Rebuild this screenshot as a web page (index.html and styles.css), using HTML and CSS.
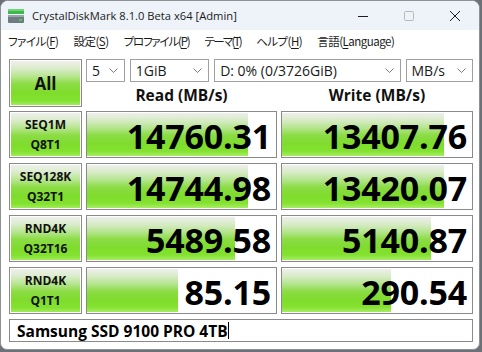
FILE: index.html
```html
<!DOCTYPE html>
<html lang="ja">
<head>
<meta charset="utf-8">
<title>CrystalDiskMark</title>
<link rel="stylesheet" href="styles.css">
</head>
<body>
<div class="window">
  <div class="titlebar">
    <svg class="appicon" width="16" height="16" viewBox="0 0 16 16">
      <rect x="0" y="1" width="16" height="5" fill="#3cb94a"/>
      <rect x="0" y="1" width="16" height="2" fill="#6fd47a"/>
      <rect x="0" y="7" width="16" height="8" rx="1" fill="#707a82"/>
      <rect x="0" y="7" width="16" height="2" fill="#9aa3aa"/>
      <rect x="11" y="11" width="3" height="2" fill="#4cd04c"/>
    </svg>
    <span class="title">CrystalDiskMark 8.1.0 Beta x64 [Admin]</span>
    <div class="controls">
      <span class="ctl"><svg width="12" height="12" viewBox="0 0 12 12"><line x1="1" y1="6.5" x2="11" y2="6.5" stroke="#1c1c1c" stroke-width="1"/></svg></span>
      <span class="ctl"><svg width="12" height="12" viewBox="0 0 12 12"><rect x="1.5" y="1.5" width="9" height="9" rx="1" fill="none" stroke="#b8b8b8" stroke-width="1"/></svg></span>
      <span class="ctl"><svg width="12" height="12" viewBox="0 0 12 12"><path d="M1 1 L11 11 M11 1 L1 11" stroke="#1c1c1c" stroke-width="1"/></svg></span>
    </div>
  </div>
  <div class="menubar">
    <span class="menu">ファイル(<u>F</u>)</span>
    <span class="menu">設定(<u>S</u>)</span>
    <span class="menu tight">プロファイル(<u>P</u>)</span>
    <span class="menu tighter">テーマ(<u>T</u>)</span>
    <span class="menu">ヘルプ(<u>H</u>)</span>
    <span class="menu">言語(<u>L</u>anguage)</span>
  </div>
  <div class="main">
    <div class="green all">All</div>
    <div class="topright">
      <div class="selects">
        <div class="select s-count"><span>5</span><svg class="chev" width="9" height="5" viewBox="0 0 9 5"><polyline points="0.5,0.5 4.5,4.5 8.5,0.5" fill="none" stroke="#7a7a7a"/></svg></div>
        <div class="select s-size"><span>1GiB</span><svg class="chev" width="9" height="5" viewBox="0 0 9 5"><polyline points="0.5,0.5 4.5,4.5 8.5,0.5" fill="none" stroke="#7a7a7a"/></svg></div>
        <div class="select s-drive"><span>D: 0% (0/3726GiB)</span><svg class="chev" width="9" height="5" viewBox="0 0 9 5"><polyline points="0.5,0.5 4.5,4.5 8.5,0.5" fill="none" stroke="#7a7a7a"/></svg></div>
        <div class="select s-unit"><span>MB/s</span><svg class="chev" width="9" height="5" viewBox="0 0 9 5"><polyline points="0.5,0.5 4.5,4.5 8.5,0.5" fill="none" stroke="#7a7a7a"/></svg></div>
      </div>
      <div class="heads">
        <div class="head">Read (MB/s)</div>
        <div class="head">Write (MB/s)</div>
      </div>
    </div>

    <div class="green label">SEQ1M<br>Q8T1</div>
    <div class="result"><div class="bar" style="width:85%"></div><span class="val">14760.31</span></div>
    <div class="result"><div class="bar" style="width:85.5%"></div><span class="val">13407.76</span></div>

    <div class="green label">SEQ128K<br>Q32T1</div>
    <div class="result"><div class="bar" style="width:85%"></div><span class="val">14744.98</span></div>
    <div class="result"><div class="bar" style="width:85.5%"></div><span class="val">13420.07</span></div>

    <div class="green label">RND4K<br>Q32T16</div>
    <div class="result"><div class="bar" style="width:78.5%"></div><span class="val">5489.58</span></div>
    <div class="result"><div class="bar" style="width:78.5%"></div><span class="val">5140.87</span></div>

    <div class="green label">RND4K<br>Q1T1</div>
    <div class="result"><div class="bar" style="width:48%"></div><span class="val">85.15</span></div>
    <div class="result"><div class="bar" style="width:57.5%"></div><span class="val">290.54</span></div>

    <div class="name"><span>Samsung SSD 9100 PRO 4TB</span><span class="caret"></span></div>
  </div>
</div>
</body>
</html>
```
FILE: styles.css
```css
html, body {
  margin: 0;
  padding: 0;
}
body {
  width: 482px;
  height: 352px;
  background: #6c7178;
  overflow: hidden;
  font-family: "Open Sans", "Noto Sans CJK JP", sans-serif;
  color: #000;
}
.window {
  box-sizing: border-box;
  width: 480px;
  height: 350px;
  border: 1px solid #8e9196;
  border-radius: 8px 8px 7px 7px;
  background: #ffffff;
  overflow: hidden;
  display: flex;
  flex-direction: column;
}
.titlebar {
  height: 29px;
  background: #eef3f9;
  display: flex;
  align-items: center;
  padding-left: 7px;
}
.appicon {
  flex: none;
  margin-top: 1px;
}
.title {
  margin-left: 8px;
  font-family: "Open Sans", sans-serif;
  font-size: 11.2px;
  color: #1a1a1a;
}
.controls {
  margin-left: auto;
  display: flex;
  height: 29px;
  padding-right: 1px;
}
.ctl {
  width: 46px;
  display: flex;
  align-items: center;
  justify-content: center;
}
.menubar {
  height: 22px;
  display: flex;
  align-items: center;
  padding-left: 7px;
  gap: 15px;
  font-family: "Noto Sans CJK JP", sans-serif;
  font-size: 11.5px;
  font-feature-settings: "palt";
  letter-spacing: -0.5px;
  color: #1a1a1a;
}
.menu.tight {
  letter-spacing: -1.2px;
}
.menu.tighter {
  letter-spacing: -1.7px;
}
.menu u {
  text-decoration-thickness: 1px;
  text-underline-offset: 2px;
}
.main {
  padding: 7px 0 0 8px;
  display: grid;
  grid-template-columns: 73px 191px 192px;
  grid-template-rows: 47px 47px 47px 47px 47px 23px;
  column-gap: 4px;
  row-gap: 5px;
}
.green {
  box-sizing: border-box;
  border: 1px solid #8a8a8a;
  background: linear-gradient(to bottom, #f1f1f1 0%, #dbeccc 18%, #b6e58d 36%, #8bdc45 52%, #7fdc2c 72%, #83e22f 88%, #a6ec63 100%);
  background-clip: padding-box;
  box-shadow: inset 0 0 0 1px #ffffff;
  display: flex;
  align-items: center;
  justify-content: center;
  text-align: center;
  font-weight: 700;
  color: #111;
}
.all {
  height: 48px;
  font-size: 17px;
}
.label {
  font-size: 12px;
  line-height: 20px;
  padding-top: 1px;
}
.topright {
  grid-column: 2 / 4;
  display: flex;
  flex-direction: column;
}
.selects {
  display: flex;
  gap: 5px;
  height: 23px;
}
.select {
  box-sizing: border-box;
  height: 23px;
  border: 1px solid #a0a0a0;
  background: #fff;
  display: flex;
  align-items: center;
  padding: 0 6px 0 5px;
  font-size: 14px;
  color: #1a1a1a;
}
.select .chev {
  margin-left: auto;
}
.s-count { width: 39px; }
.s-size { width: 80px; }
.s-drive { width: 188px; }
.s-unit { width: 68px; }
.heads {
  flex: 1;
  display: flex;
  gap: 4px;
  align-items: center;
  padding-top: 1px;
}
.head {
  flex: 1;
  text-align: center;
  font-weight: 700;
  font-size: 15.5px;
  color: #111;
}
.heads .head:first-child {
  flex: 0 0 191px;
}
.result {
  box-sizing: border-box;
  border: 1px solid #8a8a8a;
  padding: 1px 0 1px 0;
  background: #fff;
  position: relative;
  display: flex;
}
.bar {
  height: 100%;
  background: linear-gradient(to bottom, #eef0ec 0%, #d6ebc4 18%, #b2e489 36%, #8bdc45 52%, #7fdc2c 72%, #83e22f 88%, #a6ec63 100%);
}
.val {
  position: absolute;
  right: 5px;
  top: 50%;
  transform: translateY(-47%);
  font-weight: 700;
  font-size: 34px;
  line-height: 1;
  color: #000;
  letter-spacing: -0.2px;
}
.name {
  grid-column: 1 / 4;
  box-sizing: border-box;
  border: 1px solid #8a8a8a;
  background: #fff;
  display: flex;
  align-items: center;
  padding-left: 7px;
  font-weight: 700;
  font-size: 15.5px;
  color: #000;
}
.caret {
  width: 1px;
  height: 17px;
  background: #000;
}
```
